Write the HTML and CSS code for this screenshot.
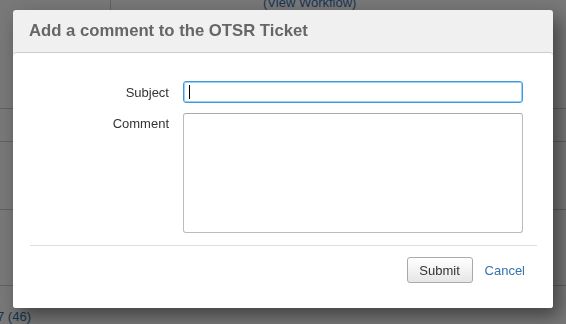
FILE: index.html
```html
<!DOCTYPE html>
<html lang="en">
<head>
    <meta charset="UTF-8">
    <title>Add a comment</title>
    <link rel="stylesheet" href="styles.css">
</head>
<body>
    <div class="page">
        <div class="page-top">
            <div class="page-side"></div>
            <div class="page-main"><a href="#">(View Workflow)</a></div>
        </div>
        <div class="page-row r1"></div>
        <div class="page-row r2"></div>
        <div class="page-row r3"></div>
        <div class="page-foot"><a href="#">7 (46)</a></div>
    </div>

    <div class="overlay"></div>

    <div class="dialog">
        <div class="dialog-header">
            <h2>Add a comment to the OTSR Ticket</h2>
        </div>
        <form class="dialog-body">
            <div class="field-grid">
                <label for="subject">Subject</label>
                <div class="input-wrap">
                    <input type="text" id="subject" class="text focused">
                    <span class="caret"></span>
                </div>
                <label for="comment" class="top">Comment</label>
                <textarea id="comment" class="textarea"></textarea>
            </div>
            <div class="buttons">
                <button type="button" class="button">Submit</button>
                <a href="#" class="cancel">Cancel</a>
            </div>
        </form>
    </div>
</body>
</html>
```

FILE: styles.css
```css
body {
    margin: 0;
    padding: 0;
    height: 324px;
    overflow: hidden;
    background: #fff;
    font-family: "Liberation Sans", Arial, sans-serif;
    font-size: 13px;
    color: #333;
}

a {
    color: #3572b0;
    text-decoration: none;
}

/* page behind the dialog */
.page {
    height: 324px;
    display: flex;
    flex-direction: column;
}

.page-top {
    display: flex;
    height: 109px;
    border-bottom: 1px solid #ccc;
}

.page-side {
    width: 110px;
    border-right: 1px solid #ccc;
}

.page-main {
    padding-left: 152px;
    margin-top: -5px;
    font-size: 13px;
}

.page-row {
    border-bottom: 1px solid #ccc;
}

.r1 { height: 32px; }
.r2 { height: 67px; }
.r3 { height: 76px; }

.page-foot {
    padding-top: 23px;
    margin-left: -3px;
    font-size: 13px;
}

.overlay {
    position: fixed;
    top: 0;
    left: 0;
    width: 100%;
    height: 100%;
    background: rgba(0, 0, 0, 0.53);
}

/* dialog */
.dialog {
    position: absolute;
    top: 10px;
    left: 13px;
    width: 540px;
    height: 298px;
    background: #f0f0f0;
    border-radius: 3px;
    box-shadow: 6px 8px 18px rgba(0, 0, 0, 0.45);
    display: flex;
    flex-direction: column;
}

.dialog-header {
    height: 42px;
    padding-left: 16px;
    display: flex;
    align-items: center;
}

.dialog-header h2 {
    margin: 0;
    font-size: 16.7px;
    font-weight: bold;
    color: #666;
}

.dialog-body {
    flex: 1;
    margin: 0;
    background: #fff;
    border-top: 1px solid #ccc;
    border-radius: 4px 4px 3px 3px;
    display: flex;
    flex-direction: column;
}

.field-grid {
    display: grid;
    grid-template-columns: 156px 340px;
    column-gap: 14px;
    row-gap: 10px;
    padding-top: 28px;
    align-items: center;
}

.field-grid label {
    text-align: right;
    color: #333;
}

.field-grid label.top {
    align-self: start;
    padding-top: 3px;
}

.input-wrap {
    position: relative;
    height: 22px;
}

.text {
    box-sizing: border-box;
    width: 340px;
    height: 22px;
    margin: 0;
    padding: 2px 5px;
    border: 1px solid #3c9ae0;
    border-radius: 3px;
    box-shadow: inset 0 0 0 1px #9fd0f2;
    outline: none;
    font-family: inherit;
    font-size: 13px;
}

.caret {
    position: absolute;
    left: 6px;
    top: 4px;
    width: 1px;
    height: 14px;
    background: #000;
}

.textarea {
    box-sizing: border-box;
    width: 340px;
    height: 120px;
    margin: 0;
    border: 1px solid #bbb;
    border-top-color: #aaa;
    border-radius: 3px;
    resize: none;
    font-family: inherit;
    font-size: 13px;
}

.buttons {
    margin: 12px 16px 0 17px;
    border-top: 1px solid #ddd;
    padding-top: 11px;
    display: flex;
    justify-content: flex-end;
    align-items: center;
    gap: 12px;
    padding-right: 12px;
}

.button {
    width: 66px;
    height: 26px;
    border: 1px solid #aaa;
    border-radius: 3px;
    background: linear-gradient(to bottom, #fff, #e6e6e6);
    font-family: inherit;
    font-size: 13px;
    color: #333;
    padding: 0;
}

.cancel {
    font-size: 13px;
}
```
